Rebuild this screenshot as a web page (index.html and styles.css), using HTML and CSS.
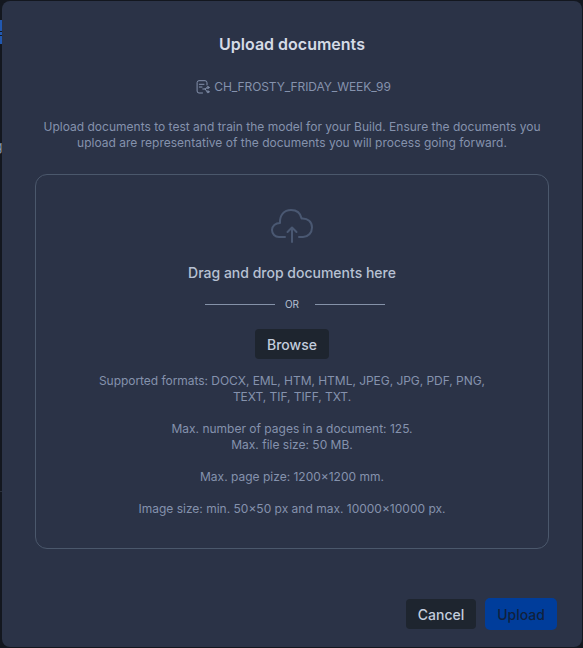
FILE: index.html
```html
<!DOCTYPE html>
<html lang="en">
<head>
<meta charset="utf-8">
<title>Upload documents</title>
<link rel="stylesheet" href="styles.css">
</head>
<body>
<div class="backdrop" aria-hidden="true">
  <span class="backdrop-tab"></span>
  <span class="backdrop-mark"></span>
  <span class="backdrop-letter">g</span>
  <span class="backdrop-rule"></span>
</div>
<main class="modal">
  <h1 class="title">Upload documents</h1>
  <div class="build">
    <svg class="build-icon" viewBox="0 0 14 14" fill="none" stroke="currentColor" stroke-linecap="round">
      <path d="M11 5V2.800Q11 .7 9 .7H3Q1.100 .7 1.100 2.600V11Q1.100 13 3 13H6.500M3.300 4.300H8M3.300 7H6"/>
      <path d="M6.800 9H9L11 7.800M9 9L11 11.500"/>
      <circle cx="12" cy="7.500" r="1"/><circle cx="12" cy="11.800" r="1"/>
    </svg>
    <span>CH_FROSTY_FRIDAY_WEEK_99</span>
  </div>
  <p class="intro">Upload documents to test and train the model for your Build. Ensure the documents you<br>upload are representative of the documents you will process going forward.</p>
  <section class="dropzone">
    <svg class="cloud" viewBox="0 0 44 36" fill="none" stroke="currentColor" stroke-width="2" stroke-linecap="round" stroke-linejoin="round">
      <path d="M15 29H9C5 29 2 26 2 22C2 18 5.500 15 10 15C9.500 7.500 14 2 21 2C26.500 2 30.500 5.300 31.600 10.500C38 10 42 14 42 19.500C42 25 38 29 33 29H29"/>
      <path d="M22 34V20M17.500 24L22 19.500L26.500 24"/>
    </svg>
    <h2 class="drop-title">Drag and drop documents here</h2>
    <div class="divider"><span>OR</span></div>
    <button class="button browse">Browse</button>
    <div class="details">
      <p class="formats">Supported formats: DOCX, EML, HTM, HTML, JPEG, JPG, PDF, PNG,<br>TEXT, TIF, TIFF, TXT.</p>
      <p>Max. number of pages in a document: 125.<br>Max. file size: 50 MB.</p>
      <p>Max. page pize: 1200×1200 mm.</p>
      <p>Image size: min. 50×50 px and max. 10000×10000 px.</p>
    </div>
  </section>
  <footer class="actions">
    <button class="button">Cancel</button>
    <button class="button upload">Upload</button>
  </footer>
</main>
</body>
</html>
```
FILE: styles.css
```css
* { box-sizing: border-box; }
body {
  margin: 0;
  width: 583px;
  height: 648px;
  padding: 1px 1px 1px 2px;
  overflow: hidden;
  background: #13171f;
  font-family: Inter, "Liberation Sans", sans-serif;
  font-size: 12px;
  line-height: 16px;
  color: #8592ad;
}
h1, h2, p { margin: 0; }
.backdrop span { position: absolute; }
.backdrop-tab { left: 0; top: 20px; width: 3px; height: 24px; background: #2158b0; }
.backdrop-mark { left: 0; top: 31px; width: 2px; height: 5px; border: solid #13171f; border-width: 1px 0; }
.backdrop-letter { left: -6px; top: 138px; font-size: 14px; }
.backdrop-rule { left: 0; top: 491px; width: 2px; height: 1px; background: #2a303b; }
.modal {
  position: relative;
  display: flex;
  flex-direction: column;
  align-items: center;
  width: 580px;
  height: 646px;
  padding: 31px 25px 17px 33px;
  border-radius: 8px;
  background: #2b3347;
}
.title { margin-right: 8px; font-size: 16px; line-height: 24px; font-weight: 600; color: #d5dbe6; }
.build { display: flex; align-items: center; gap: 4px; margin: 23px 5px 0 0; letter-spacing: -0.09px; }
.build-icon { width: 14px; height: 14px; }
.intro { margin: 24px 8px 0 0; text-align: center; white-space: nowrap; letter-spacing: 0.01px; }
.dropzone {
  display: flex;
  flex-direction: column;
  align-items: center;
  align-self: flex-start;
  width: 514px;
  height: 375px;
  margin-top: 23px;
  padding-top: 33px;
  border: 1px solid #4b586c;
  border-radius: 12px;
}
.cloud { width: 44px; height: 36px; color: #4a5872; }
.drop-title { margin-top: 19px; font-size: 14px; line-height: 20px; font-weight: 500; color: #b7c1d3; }
.divider { display: flex; align-items: center; width: 180px; height: 16px; margin: 13px 0 0 6px; font-size: 10px; color: #b7c1d3; }
.divider::before, .divider::after { content: ""; width: 70px; height: 1px; background: #8592a8; }
.divider span { width: 40px; padding-right: 6px; text-align: center; }
.button {
  height: 30px;
  padding: 2px 12px 0;
  border: 0;
  border-radius: 4px;
  background: #1e252f;
  color: #c3cddd;
  font: 500 14px/20px Inter, "Liberation Sans", sans-serif;
}
.browse { width: 74px; margin-top: 17px; }
.details { display: grid; gap: 16px; margin-top: 14px; text-align: center; white-space: nowrap; }
.formats { letter-spacing: -0.04px; }
.actions { display: flex; align-items: center; align-self: flex-end; gap: 9px; margin-top: auto; }
.actions .button { width: 70px; padding: 2px 0 0; }
.actions .upload { width: 72px; height: 32px; border-radius: 5px; background: #003d9b; color: #11213d; }
```
